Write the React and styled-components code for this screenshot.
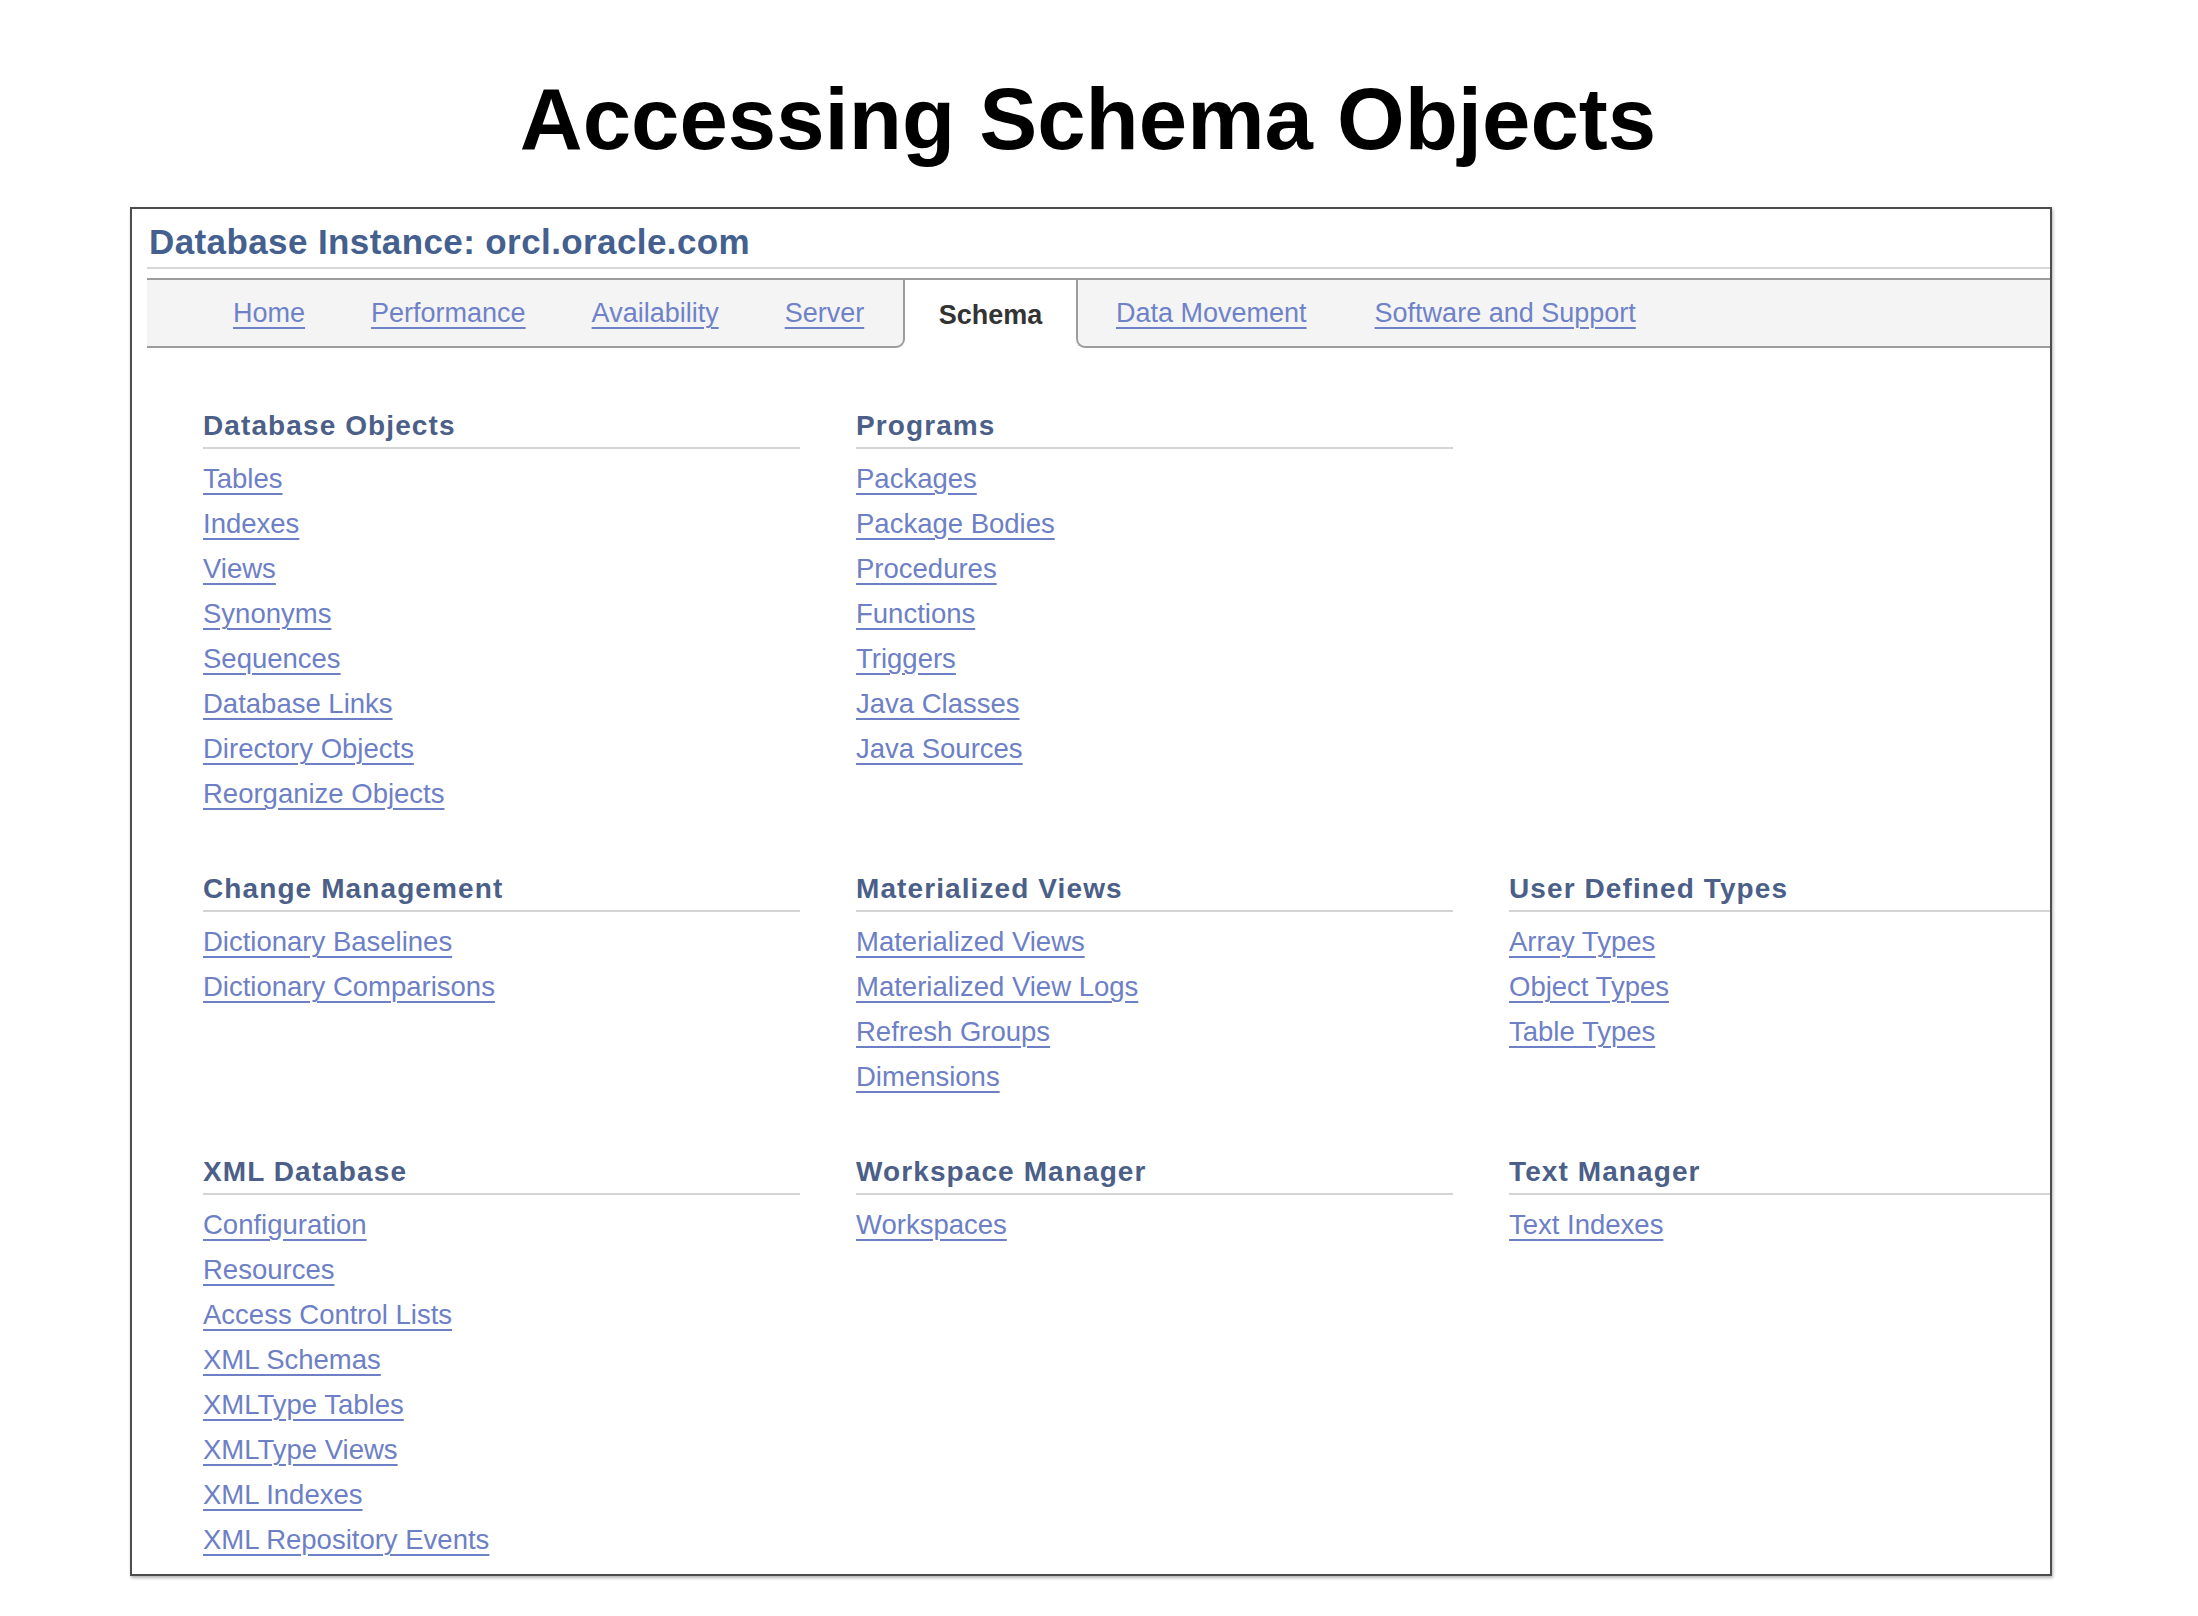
import React from "react";
import styled, { createGlobalStyle } from "styled-components";

const GlobalStyle = createGlobalStyle`
  body {
    margin: 0;
    background: #ffffff;
    font-family: "Liberation Sans", Arial, sans-serif;
  }
`;

const sections = [
  {
    title: "Database Objects",
    links: [
      "Tables",
      "Indexes",
      "Views",
      "Synonyms",
      "Sequences",
      "Database Links",
      "Directory Objects",
      "Reorganize Objects",
    ],
  },
  {
    title: "Programs",
    links: [
      "Packages",
      "Package Bodies",
      "Procedures",
      "Functions",
      "Triggers",
      "Java Classes",
      "Java Sources",
    ],
  },
  null,
  {
    title: "Change Management",
    links: ["Dictionary Baselines", "Dictionary Comparisons"],
  },
  {
    title: "Materialized Views",
    links: [
      "Materialized Views",
      "Materialized View Logs",
      "Refresh Groups",
      "Dimensions",
    ],
  },
  {
    title: "User Defined Types",
    links: ["Array Types", "Object Types", "Table Types"],
  },
  {
    title: "XML Database",
    links: [
      "Configuration",
      "Resources",
      "Access Control Lists",
      "XML Schemas",
      "XMLType Tables",
      "XMLType Views",
      "XML Indexes",
      "XML Repository Events",
    ],
  },
  {
    title: "Workspace Manager",
    links: ["Workspaces"],
  },
  {
    title: "Text Manager",
    links: ["Text Indexes"],
  },
];

const App = () => {
  return (
    <Page>
      <GlobalStyle />
      <Slide>
        <Title>Accessing Schema Objects</Title>
        <Panel>
          <InstanceTitle>Database Instance: orcl.oracle.com</InstanceTitle>
          <TabBar>
            <TabGroup $side="right" $width={758} $pl={86} $gap={66}>
              <TabLink href="#">Home</TabLink>
              <TabLink href="#">Performance</TabLink>
              <TabLink href="#">Availability</TabLink>
              <TabLink href="#">Server</TabLink>
            </TabGroup>
            <ActiveTab>Schema</ActiveTab>
            <TabGroup $side="left" $pl={38} $gap={68}>
              <TabLink href="#">Data Movement</TabLink>
              <TabLink href="#">Software and Support</TabLink>
            </TabGroup>
          </TabBar>
          <Content>
            {sections.map((section, i) =>
              section ? (
                <Section key={i}>
                  <SectionTitle>{section.title}</SectionTitle>
                  <LinkList>
                    {section.links.map((link) => (
                      <Item key={link}>
                        <Link href="#">{link}</Link>
                      </Item>
                    ))}
                  </LinkList>
                </Section>
              ) : (
                <div key={i} />
              )
            )}
          </Content>
        </Panel>
      </Slide>
    </Page>
  );
};

const Page = styled.div`
  width: 2198px;
  min-height: 1616px;
  padding: 75px 0 0 130px;
  box-sizing: border-box;
`;

const Slide = styled.div`
  width: 1922px;
`;

const Title = styled.h1`
  margin: 0 0 45px;
  padding-right: 6px;
  font-size: 87px;
  line-height: 87px;
  font-weight: bold;
  color: #000;
  text-align: center;
`;

const Panel = styled.div`
  border: 2px solid #4d4d4d;
  box-shadow: 1px 2px 3px rgba(0, 0, 0, 0.3);
  padding: 12px 0 12px 15px;
`;

const InstanceTitle = styled.div`
  font-size: 35px;
  line-height: 40px;
  font-weight: bold;
  letter-spacing: 0.4px;
  color: #44608e;
  padding: 1px 0 5px 2px;
  border-bottom: 2px solid #d8d8d8;
`;

const TabBar = styled.div`
  display: flex;
  height: 70px;
  margin-top: 9px;
`;

const TabGroup = styled.div`
  display: flex;
  align-items: center;
  box-sizing: border-box;
  height: 70px;
  gap: ${(p) => p.$gap}px;
  padding-left: ${(p) => p.$pl}px;
  ${(p) => (p.$width ? `width: ${p.$width}px;` : "flex: 1;")}
  background: #f4f4f4;
  border-top: 2px solid #9c9c9c;
  border-bottom: 2px solid #9c9c9c;
  border-${(p) => p.$side}: 2px solid #9c9c9c;
  border-bottom-${(p) => p.$side}-radius: 9px;
`;

const TabLink = styled.a`
  font-size: 27px;
  line-height: 32px;
  color: #6f82c8;
  text-decoration: underline;
  text-decoration-thickness: 2px;
  text-underline-offset: 5px;
  white-space: nowrap;
`;

const ActiveTab = styled.div`
  display: flex;
  align-items: center;
  justify-content: center;
  box-sizing: border-box;
  width: 171px;
  height: 70px;
  background: #fff;
  border-top: 2px solid #9c9c9c;
  font-size: 27px;
  line-height: 32px;
  font-weight: bold;
  color: #333;
  padding-top: 2px;
`;

const Content = styled.div`
  display: grid;
  grid-template-columns: 597px 597px 1fr;
  column-gap: 56px;
  row-gap: 57px;
  padding: 62px 0 0 56px;
`;

const Section = styled.div`
  display: flex;
  flex-direction: column;
`;

const SectionTitle = styled.div`
  font-size: 28px;
  line-height: 32px;
  font-weight: bold;
  letter-spacing: 1.1px;
  color: #4b5f88;
  padding-bottom: 5px;
  border-bottom: 2px solid #d4d4d4;
  margin-bottom: 7px;
`;

const LinkList = styled.ul`
  list-style: none;
  margin: 0;
  padding: 0;
`;

const Item = styled.li`
  font-size: 27.5px;
  line-height: 45px;
`;

const Link = styled.a`
  color: #6d80c6;
  text-decoration: underline;
  text-decoration-thickness: 2px;
  text-underline-offset: 5px;
  white-space: nowrap;
`;

export default App;
